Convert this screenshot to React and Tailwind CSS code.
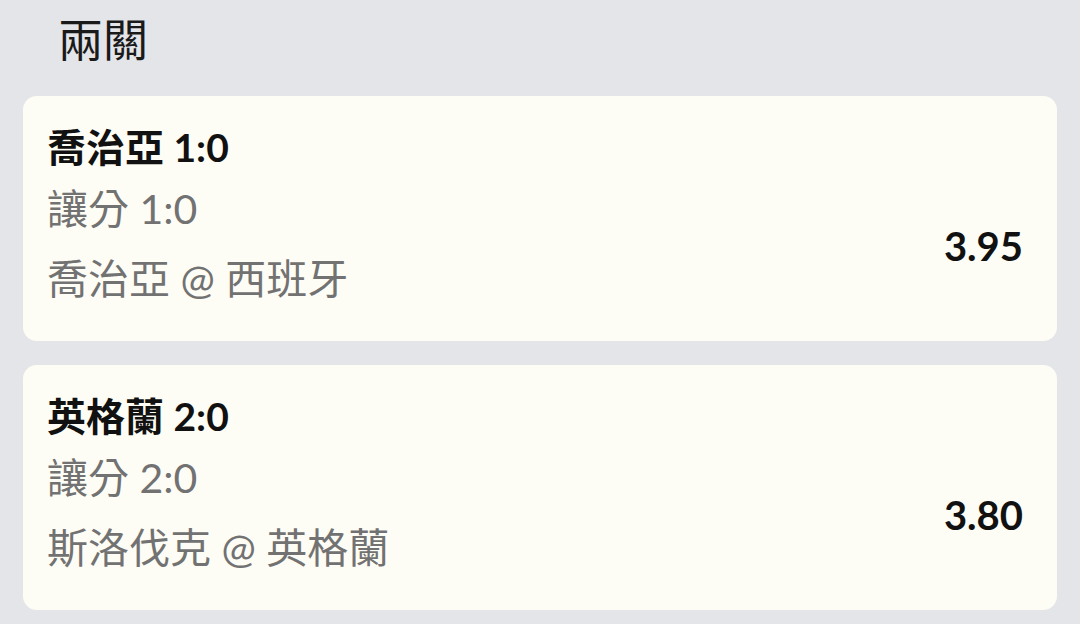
import React from 'react';

const legs = [
    { title: "喬治亞 1:0", market: "讓分 1:0", match: "喬治亞 @ 西班牙", odds: "3.95" },
    { title: "英格蘭 2:0", market: "讓分 2:0", match: "斯洛伐克 @ 英格蘭", odds: "3.80" }
];

const LegCard = ({ leg }) => (
    <div className="bg-[#fefdf5] rounded-[14px] pl-[24px] pr-[34px] pt-6 pb-[35px]">
        <div className="text-[39px] leading-[54px] font-bold text-[#111111]">{leg.title}</div>
        <div className="flex items-center justify-between">
            <div className="text-[41px] text-[#727272]">
                <div className="mt-[8px] leading-[54px]">{leg.market}</div>
                <div className="mt-[16px] leading-[54px]">{leg.match}</div>
            </div>
            <div className="text-[40px] font-bold text-[#111111] leading-none pt-[11px]">{leg.odds}</div>
        </div>
    </div>
);

export default function App() {
    return (
        <div
            className="w-[1080px] h-[624px] bg-[#e4e5e9] overflow-hidden"
            style={{ fontFamily: 'Lato, "Noto Sans CJK TC", sans-serif' }}
        >
            <div className="h-[80px] leading-[80px] pl-[58px] text-[45px] text-[#1a1a1a]">兩關</div>
            {/* Leg list */}
            <div className="mt-4 mx-[23px] flex flex-col gap-6">
                {legs.map(leg => <LegCard key={leg.title} leg={leg} />)}
            </div>
        </div>
    );
}
